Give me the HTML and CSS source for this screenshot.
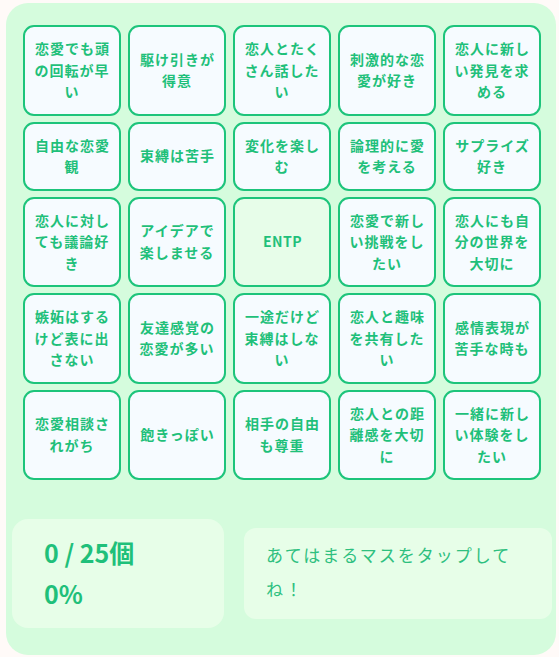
FILE: index.html
```html
<!DOCTYPE html>
<html lang="ja">
<head>
<meta charset="utf-8">
<link rel="stylesheet" href="styles.css">
</head>
<body>
<div class="card">
  <div class="grid">
    <div class="cell">恋愛でも頭の回転が早い</div>
    <div class="cell">駆け引きが得意</div>
    <div class="cell">恋人とたくさん話したい</div>
    <div class="cell">刺激的な恋愛が好き</div>
    <div class="cell">恋人に新しい発見を求める</div>
    <div class="cell">自由な恋愛観</div>
    <div class="cell">束縛は苦手</div>
    <div class="cell">変化を楽しむ</div>
    <div class="cell">論理的に愛を考える</div>
    <div class="cell">サプライズ好き</div>
    <div class="cell">恋人に対しても議論好き</div>
    <div class="cell">アイデアで楽しませる</div>
    <div class="cell free">ENTP</div>
    <div class="cell">恋愛で新しい挑戦をしたい</div>
    <div class="cell">恋人にも自分の世界を大切に</div>
    <div class="cell">嫉妬はするけど表に出さない</div>
    <div class="cell">友達感覚の恋愛が多い</div>
    <div class="cell">一途だけど束縛はしない</div>
    <div class="cell">恋人と趣味を共有したい</div>
    <div class="cell">感情表現が苦手な時も</div>
    <div class="cell">恋愛相談されがち</div>
    <div class="cell">飽きっぽい</div>
    <div class="cell">相手の自由も尊重</div>
    <div class="cell">恋人との距離感を大切に</div>
    <div class="cell">一緒に新しい体験をしたい</div>
  </div>
  <div class="bottom">
    <div class="stats">
      <div class="stat-line">0 / 25個</div>
      <div class="stat-line">0%</div>
    </div>
    <div class="message">あてはまるマスをタップしてね！</div>
  </div>
</div>
</body>
</html>
```

FILE: styles.css
```css
html, body {
  margin: 0;
  padding: 0;
}
body {
  background: #fffaf8;
  font-family: "Noto Sans CJK JP", "Noto Sans", sans-serif;
  color: #1fc07a;
}
.card {
  margin: 3px 0 0 6px;
  width: 550px;
  height: 652px;
  box-sizing: border-box;
  background: #d5fcdd;
  border-radius: 22px;
  padding-top: 22px;
}
.grid {
  margin: 0 16px 0 17px;
  display: grid;
  grid-template-columns: repeat(5, 98px);
  column-gap: 7px;
  row-gap: 6px;
}
.cell {
  box-sizing: border-box;
  border: 2px solid #1dc47b;
  border-radius: 11px;
  background: #f6fbff;
  padding: 11px 6px;
  min-height: 68px;
  display: flex;
  align-items: center;
  justify-content: center;
  text-align: center;
  font-size: 14px;
  font-weight: 700;
  line-height: 21.5px;
  letter-spacing: 1px;
  text-indent: 1px;
}
.cell.free {
  background: #e7fde9;
  letter-spacing: 0.5px;
}
.bottom {
  margin-top: 39px;
  padding: 0 4px 0 6px;
  display: flex;
  align-items: center;
  gap: 20px;
}
.stats {
  width: 212px;
  height: 109px;
  box-sizing: border-box;
  background: #e7fee8;
  border-radius: 16px;
  padding: 13px 32px;
  display: flex;
  flex-direction: column;
}
.stat-line {
  font-size: 25px;
  font-weight: 700;
  line-height: 41px;
}
.message {
  flex: 1;
  height: 91px;
  box-sizing: border-box;
  background: #e7fee8;
  border-radius: 12px;
  padding: 10px 22px;
  font-size: 17px;
  line-height: 34px;
  letter-spacing: 2px;
  color: #2ec07f;
}
```
